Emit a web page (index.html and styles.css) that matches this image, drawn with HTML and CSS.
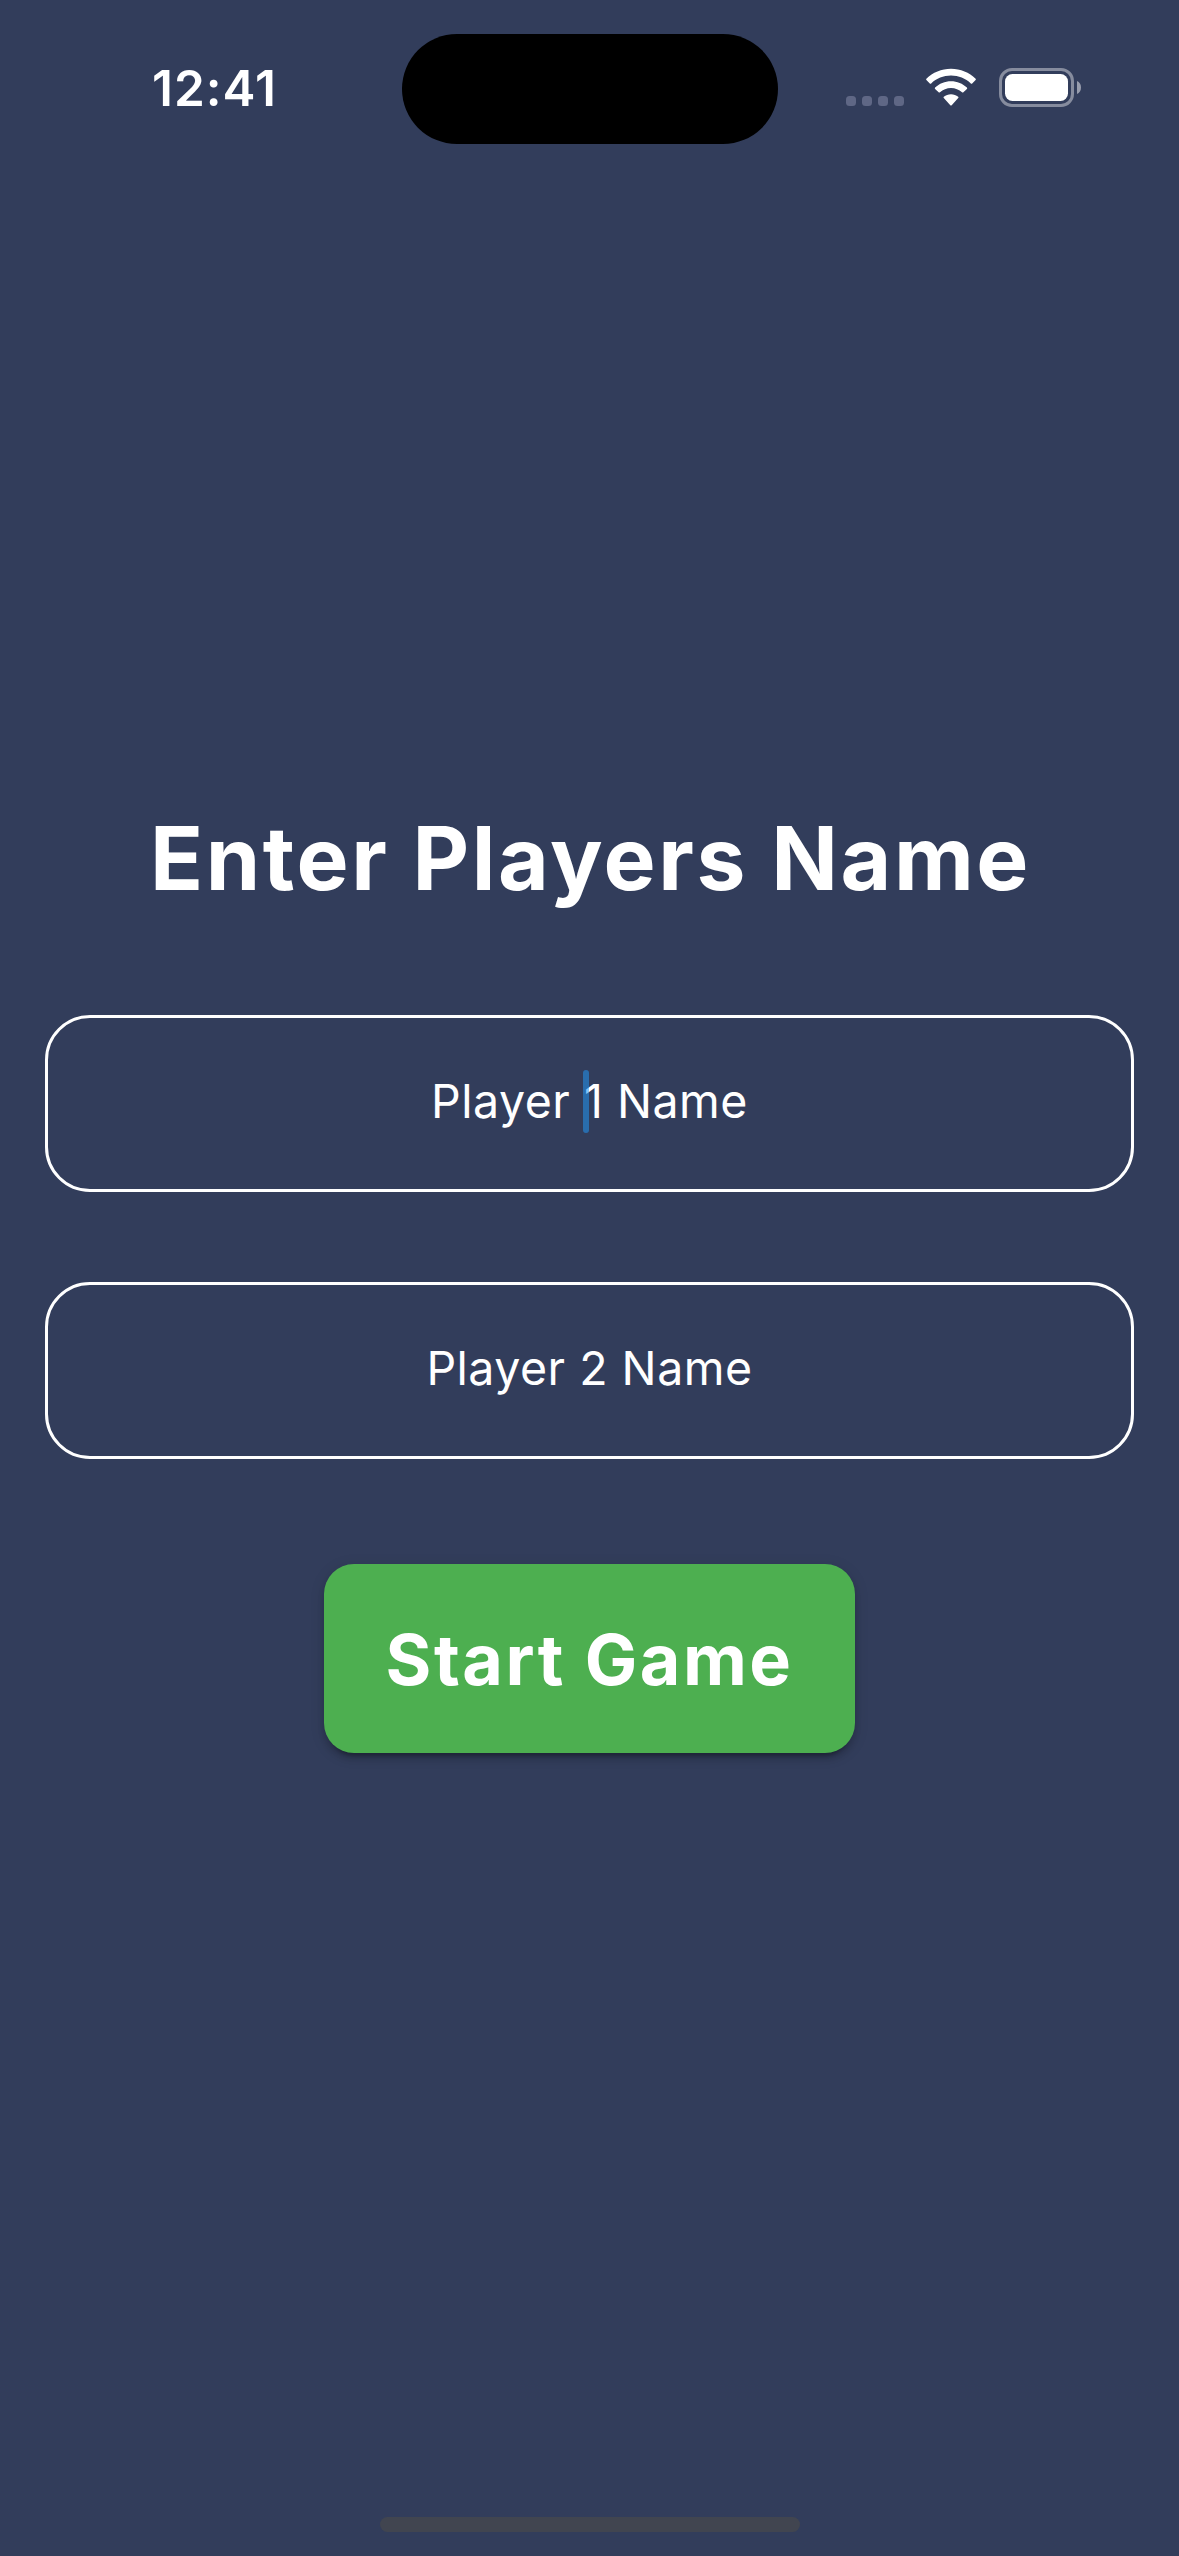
FILE: index.html
```html
<!DOCTYPE html>
<html lang="en">
<head>
<meta charset="utf-8">
<title>Enter Players Name</title>
<link rel="stylesheet" href="styles.css">
</head>
<body>
<div class="screen">
  <header class="status-bar">
    <div class="status-side"><time class="clock">12:41</time></div>
    <div class="island"></div>
    <div class="status-side status-icons">
      <svg class="cellular" width="58" height="10" viewBox="0 0 58 10">
        <rect width="10" height="10" rx="3.5"/><rect x="16" width="10" height="10" rx="3.5"/><rect x="32" width="10" height="10" rx="3.5"/><rect x="48" width="10" height="10" rx="3.5"/>
      </svg>
      <svg class="wifi" width="50" height="38" viewBox="0 0 50 38">
        <path d="M25 0.8C34.5 0.8 43.3 4.5 49.6 10.7Q50.2 11.3 49.6 12L46.2 15.4Q45.5 16 44.8 15.4C39.6 10.5 32.5 7.6 25 7.6S10.4 10.5 5.2 15.4Q4.5 16 3.8 15.4L0.4 12Q-0.2 11.3 0.4 10.7C6.7 4.5 15.5 0.8 25 0.8Z"/>
        <path d="M25 13.2C31.1 13.2 36.7 15.6 40.9 19.5Q41.6 20.2 40.9 20.9L37.4 24.3Q36.7 24.9 36 24.3C33.1 21.6 29.2 20 25 20S16.9 21.6 14 24.3Q13.3 24.9 12.6 24.3L9.1 20.9Q8.4 20.2 9.1 19.5C13.3 15.6 18.9 13.2 25 13.2Z"/>
        <path d="M25 26.2C27.7 26.2 30.2 27.1 32.2 28.7Q32.9 29.4 32.2 30.1L25.7 37.2Q25 37.8 24.3 37.2L17.8 30.1Q17.1 29.4 17.8 28.7C19.8 27.1 22.3 26.2 25 26.2Z"/>
      </svg>
      <svg class="battery" width="82" height="39" viewBox="0 0 82 39">
        <rect class="battery-case" x="1.5" y="1.5" width="72" height="36" rx="11.5"/>
        <rect x="6" y="6" width="63" height="27" rx="7.5"/>
        <path class="battery-cap" d="M78 13C80.5 14 82 16.5 82 19.5S80.5 25 78 26Z"/>
      </svg>
    </div>
  </header>
  <main class="form">
    <h1 class="title">Enter Players Name</h1>
    <div class="field"><span class="hint">Player 1 Name</span><span class="caret"></span></div>
    <div class="field"><span class="hint">Player 2 Name</span></div>
    <button class="start" type="button">Start Game</button>
  </main>
  <div class="home-indicator"></div>
</div>
</body>
</html>
```
FILE: styles.css
```css
* {
  box-sizing: border-box;
}

body {
  margin: 0;
  background: #323d5b;
  color: #fff;
  font-family: Inter, "Liberation Sans", sans-serif;
}

.screen {
  display: flex;
  flex-direction: column;
  align-items: center;
  width: 1179px;
  height: 2556px;
  padding-bottom: 24px;
}

.status-bar {
  display: flex;
  width: 100%;
  height: 144px;
  padding-top: 34px;
}

.status-side {
  flex: none;
  width: 401.5px;
}

.clock {
  display: block;
  padding: 24px 0 0 152px;
  font-size: 49.5px;
  font-weight: 600;
  line-height: 60px;
  letter-spacing: 1px;
}

.island {
  width: 376px;
  height: 110px;
  border-radius: 55px;
  background: #000;
}

.status-icons {
  display: flex;
  align-items: flex-start;
  padding-left: 68.5px;
  fill: #fff;
}

.cellular {
  margin-top: 62px;
  fill: #5f6785;
}

.wifi {
  margin: 34px 0 0 22px;
}

.battery {
  margin: 34px 0 0 23px;
}

.battery-case {
  fill: none;
  stroke: #868c9e;
  stroke-width: 3;
}

.battery-cap {
  fill: #989dad;
}

.form {
  display: flex;
  flex: 1;
  flex-direction: column;
  align-items: center;
  width: 100%;
  padding: 660px 45px 0;
}

.title {
  height: 108px;
  margin: 0 0 103px;
  padding-left: 2px;
  font-size: 87.5px;
  font-weight: 700;
  line-height: 108px;
  letter-spacing: 2.55px;
  white-space: nowrap;
}

.field {
  position: relative;
  display: flex;
  justify-content: center;
  width: 1089px;
  height: 177px;
  margin-bottom: 90px;
  padding-top: 53px;
  border: 3px solid #fff;
  border-radius: 45px;
}

.hint {
  font-size: 46.5px;
  font-weight: 400;
  line-height: 60px;
  letter-spacing: 0.5px;
  white-space: nowrap;
}

.caret {
  position: absolute;
  top: 52px;
  left: 535px;
  width: 6px;
  height: 63px;
  border-radius: 3px;
  background: rgba(33, 150, 243, 0.54);
}

.start {
  width: 531px;
  height: 189px;
  margin-top: 15px;
  padding: 2px 0 0;
  border: 0;
  border-radius: 30px;
  background: #4daf50;
  box-shadow: 0 9px 3px -6px rgba(0, 0, 0, 0.2), 0 6px 6px rgba(0, 0, 0, 0.14), 0 3px 15px rgba(0, 0, 0, 0.12);
  color: #fff;
  font: 700 70px/84px Inter, "Liberation Sans", sans-serif;
  letter-spacing: 2.45px;
}

.home-indicator {
  width: 420px;
  height: 15px;
  border-radius: 7.5px;
  background: #414550;
}
```
